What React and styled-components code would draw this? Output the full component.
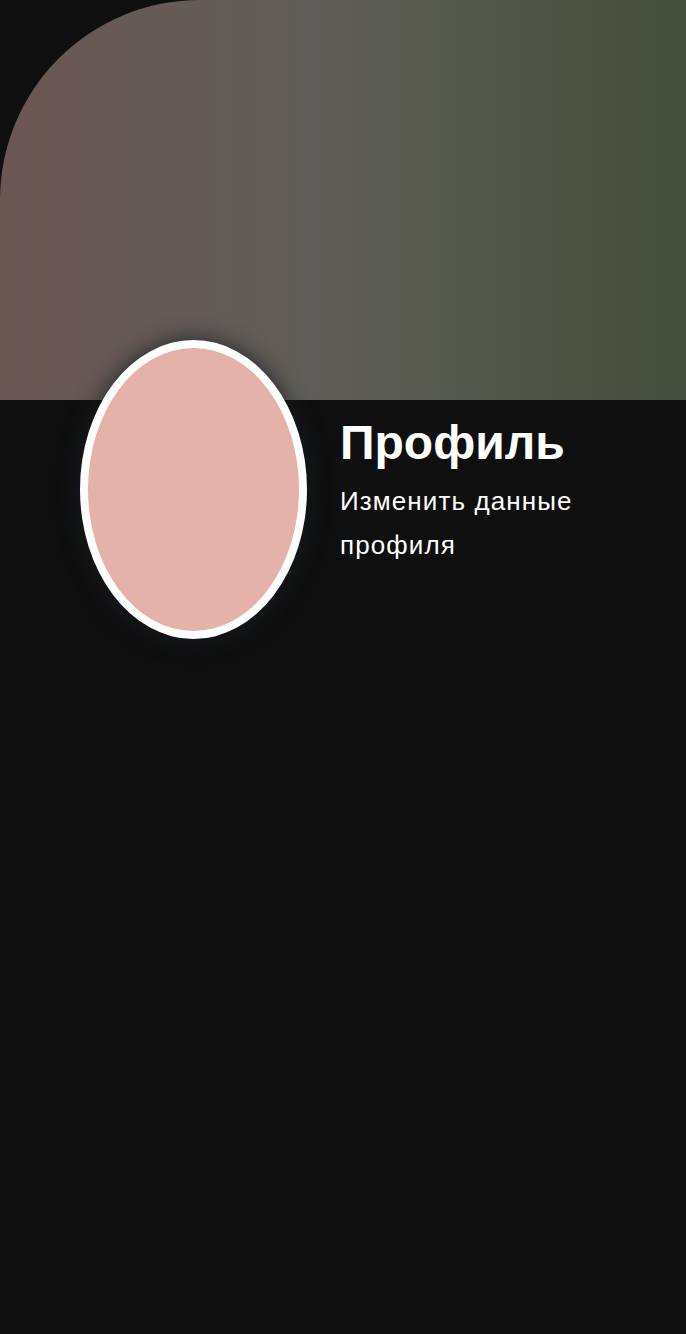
import React from "react";
import styled, { createGlobalStyle } from "styled-components";

const GlobalStyle = createGlobalStyle`
  html, body {
    margin: 0;
    padding: 0;
    background: #0f0f0f;
    font-family: "Liberation Sans", Arial, sans-serif;
    color: #ffffff;
  }
`;

const Page = styled.div`
  min-height: 1334px;
  background: #0f0f0f;
`;

const Banner = styled.div`
  height: 400px;
  border-top-left-radius: 200px;
  background: linear-gradient(to right, #6b5654 0%, #605e58 45%, #434f3a 100%);
`;

const ProfileRow = styled.div`
  display: flex;
  align-items: flex-start;
  gap: 33px;
  padding-left: 80px;
  margin-top: -60px;
`;

const Avatar = styled.div`
  flex: none;
  width: 211px;
  height: 283px;
  border: 8px solid #ffffff;
  border-radius: 50%;
  background: #e4b2a9;
  box-shadow: 0 0 22px rgba(22, 30, 38, 0.9);
`;

const Info = styled.div`
  padding-top: 75px;
  width: 270px;
`;

const Title = styled.h1`
  margin: 0 0 9px;
  font-size: 48px;
  font-weight: 700;
  line-height: 55px;
`;

const Subtitle = styled.p`
  margin: 0;
  font-size: 26px;
  letter-spacing: 1.1px;
  line-height: 44px;
`;

export default function App() {
  return (
    <Page>
      <GlobalStyle />
      <Banner />
      <ProfileRow>
        <Avatar />
        <Info>
          <Title>Профиль</Title>
          <Subtitle>Изменить данные профиля</Subtitle>
        </Info>
      </ProfileRow>
    </Page>
  );
}
